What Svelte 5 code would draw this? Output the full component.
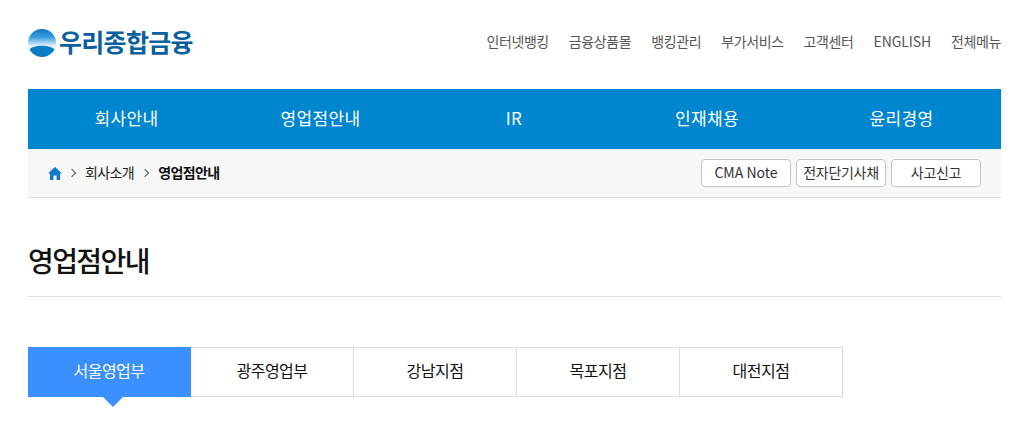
<script>
  const util = ["인터넷뱅킹", "금융상품몰", "뱅킹관리", "부가서비스", "고객센터", "ENGLISH", "전체메뉴"];
  const gnb = ["회사안내", "영업점안내", "IR", "인재채용", "윤리경영"];
  const tabs = ["서울영업부", "광주영업부", "강남지점", "목포지점", "대전지점"];
  const quick = ["CMA Note", "전자단기사채", "사고신고"];
</script>

<div class="page">
  <header class="top">
    <a class="logo" href="#top">
      <svg width="28" height="28" viewBox="0 0 28 28" aria-hidden="true">
        <defs>
          <linearGradient id="globe" x1="0" y1="0" x2="0" y2="1">
            <stop offset="0" stop-color="#0a76c0" />
            <stop offset="0.3" stop-color="#3a9fe0" />
            <stop offset="0.62" stop-color="#eef8fd" />
          </linearGradient>
        </defs>
        <circle cx="14" cy="14" r="14" fill="url(#globe)" />
        <path d="M1.5 20.3 C6 15.4 22 15.4 26.5 20.3 C24 25 19.5 28 14 28 C8.5 28 4 25 1.5 20.3 Z" fill="#0b7cc6" />
      </svg>
      <span>우리종합금융</span>
    </a>
    <nav class="util">
      {#each util as item}
        <a href="#top" class:latin={item === "ENGLISH"}>{item}</a>
      {/each}
    </nav>
  </header>

  <nav class="gnb">
    {#each gnb as item}
      <a href="#top">{item}</a>
    {/each}
  </nav>

  <div class="crumb">
    <div class="path">
      <svg width="14" height="13" viewBox="0 0 14 13" aria-hidden="true">
        <path d="M7 0 L14 6.6 L12 6.6 L12 13 L8.6 13 L8.6 8.6 L5.4 8.6 L5.4 13 L2 13 L2 6.6 L0 6.6 Z" fill="#0b78c8" />
      </svg>
      <i class="sep"></i>
      <span>회사소개</span>
      <i class="sep second"></i>
      <strong>영업점안내</strong>
    </div>
    <div class="quick">
      {#each quick as item}
        <button type="button">{item}</button>
      {/each}
    </div>
  </div>

  <h1>영업점안내</h1>

  <ul class="tabs">
    {#each tabs as tab, i}
      <li class:active={i === 0}>{tab}</li>
    {/each}
  </ul>
</div>

<style>
  :global(body) {
    margin: 0;
    background: #fff;
  }

  .page {
    width: 973px;
    height: 421px;
    margin-left: 28px;
    overflow: hidden;
    font-family: "Noto Sans CJK KR", "Noto Sans", sans-serif;
  }

  .top {
    display: flex;
    justify-content: space-between;
    align-items: center;
    height: 89px;
  }

  .logo {
    display: flex;
    align-items: center;
    gap: 4px;
    color: #0a5f9e;
    text-decoration: none;
    font-size: 25px;
    font-weight: 700;
    letter-spacing: -0.7px;
    line-height: 28px;
    margin-top: -4px;
  }

  .logo span {
    margin: -3px 0 0 -1px;
  }

  .util {
    display: flex;
    gap: 20px;
    margin-top: -8px;
  }

  .util a {
    color: #555;
    font-size: 14px;
    letter-spacing: -0.4px;
    text-decoration: none;
  }

  .util a.latin {
    letter-spacing: -0.1px;
  }

  .gnb {
    display: grid;
    grid-template-columns: 197px 191px 196px 190px 199px;
    height: 60px;
    background: #0085cf;
  }

  .gnb a {
    display: flex;
    align-items: center;
    justify-content: center;
    padding-bottom: 4px;
    color: #fff;
    font-size: 17px;
    letter-spacing: 0.4px;
    text-decoration: none;
  }

  .crumb {
    display: flex;
    justify-content: space-between;
    align-items: center;
    height: 48px;
    background: #f7f7f7;
    border-bottom: 1px solid #ddd;
    padding: 0 20px;
  }

  .path {
    display: flex;
    align-items: center;
    font-size: 14px;
    letter-spacing: -0.6px;
    line-height: 20px;
    color: #222;
  }

  .path span,
  .path strong {
    margin-top: -2px;
  }

  .path span {
    margin-left: -1px;
  }

  .path strong {
    color: #111;
    font-weight: 700;
    letter-spacing: -0.6px;
  }

  .sep {
    width: 5px;
    height: 5px;
    margin: 0 11px 0 7px;
    border-top: 1px solid #555;
    border-right: 1px solid #555;
    transform: rotate(45deg);
  }

  .sep.second {
    margin-left: 8px;
    margin-right: 10px;
  }

  .quick {
    display: flex;
    gap: 5px;
  }

  .quick button {
    width: 90px;
    height: 28px;
    padding: 0 0 2px;
    border: 1px solid #c4c4c4;
    border-radius: 4px;
    background: #fff;
    color: #333;
    font-family: inherit;
    font-size: 14px;
    letter-spacing: -0.3px;
  }

  .quick button:first-child {
    letter-spacing: 0;
  }

  h1 {
    margin: 0;
    height: 98px;
    border-bottom: 1px solid #ddd;
    font-size: 28px;
    font-weight: 500;
    line-height: 124px;
    letter-spacing: -1.6px;
    color: #111;
  }

  .tabs {
    display: flex;
    margin: 50px 0 0;
    padding: 0;
    list-style: none;
  }

  .tabs li {
    position: relative;
    box-sizing: border-box;
    width: 163px;
    height: 50px;
    padding-bottom: 4px;
    border: 1px solid #ddd;
    border-left: 0;
    display: flex;
    align-items: center;
    justify-content: center;
    font-size: 16px;
    letter-spacing: -0.5px;
    color: #111;
  }

  .tabs li.active {
    background: #3b8fff;
    border-color: #3b8fff;
    color: #fff;
  }

  .tabs li.active::after {
    content: "";
    position: absolute;
    left: 75px;
    bottom: -11px;
    border-top: 10px solid #3b8fff;
    border-left: 10px solid transparent;
    border-right: 10px solid transparent;
  }
</style>
